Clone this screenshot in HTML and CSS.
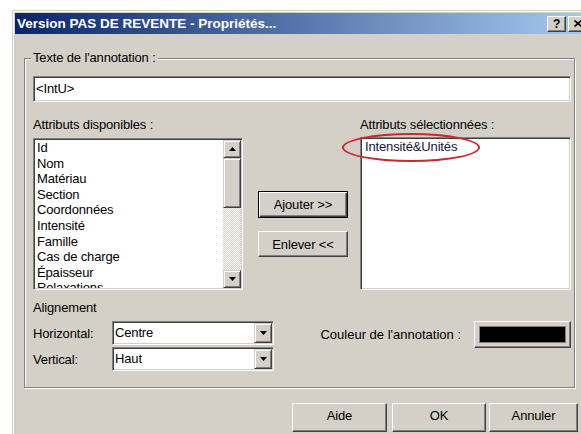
FILE: index.html
```html
<!DOCTYPE html>
<html lang="fr">
<head>
<meta charset="utf-8">
<title>Propriétés</title>
<link rel="stylesheet" href="styles.css">
</head>
<body>
<div class="dialog">
  <div class="titlebar">
    <span class="title">Version PAS DE REVENTE - Propriétés...</span>
    <span class="caption-btns">
      <span class="cap-btn help">?</span>
      <span class="cap-btn close"><svg width="8" height="7" viewBox="0 0 8 7"><path d="M0.5 0.5 L7.5 6.5 M7.5 0.5 L0.5 6.5" stroke="#000" stroke-width="1.6"/></svg></span>
    </span>
  </div>
  <div class="content">
    <fieldset class="group">
      <legend>Texte de l'annotation :</legend>
      <div class="textbox">&lt;IntU&gt;</div>

      <div class="attrs">
        <div class="col col-left">
          <div class="lbl">Attributs disponibles :</div>
          <div class="listbox">
            <ul class="items">
              <li>Id</li>
              <li>Nom</li>
              <li>Matériau</li>
              <li>Section</li>
              <li>Coordonnées</li>
              <li>Intensité</li>
              <li>Famille</li>
              <li>Cas de charge</li>
              <li>Épaisseur</li>
              <li>Relaxations</li>
            </ul>
            <div class="vscroll">
              <span class="sb-btn"><svg width="7" height="4" viewBox="0 0 7 4"><polygon points="0,4 7,4 3.5,0"/></svg></span>
              <span class="sb-thumb"></span>
              <span class="sb-track"></span>
              <span class="sb-btn"><svg width="7" height="4" viewBox="0 0 7 4"><polygon points="0,0 7,0 3.5,4"/></svg></span>
            </div>
          </div>
        </div>

        <div class="mid">
          <span class="btn btn-default">Ajouter &gt;&gt;</span>
          <span class="btn btn-remove">Enlever &lt;&lt;</span>
        </div>

        <div class="col col-right">
          <div class="lbl">Attributs sélectionnées :</div>
          <div class="sel-wrap">
            <div class="listbox">
              <ul class="items sel-items">
                <li>Intensité&amp;Unités</li>
              </ul>
            </div>
            <span class="mark"></span>
          </div>
        </div>
      </div>

      <div class="bottom">
        <div class="align">
          <div class="lbl">Alignement</div>
          <div class="row">
            <span class="row-lbl">Horizontal:</span>
            <div class="combo">
              <span class="val">Centre</span>
              <span class="drop"><svg width="7" height="4" viewBox="0 0 7 4"><polygon points="0,0 7,0 3.5,4"/></svg></span>
            </div>
          </div>
          <div class="row row-second">
            <span class="row-lbl">Vertical:</span>
            <div class="combo">
              <span class="val">Haut</span>
              <span class="drop"><svg width="7" height="4" viewBox="0 0 7 4"><polygon points="0,0 7,0 3.5,4"/></svg></span>
            </div>
          </div>
        </div>
        <div class="colour">
          <span class="colour-lbl">Couleur de l'annotation :</span>
          <span class="swatch-btn"><span class="swatch"></span></span>
        </div>
      </div>
    </fieldset>

    <div class="actions">
      <span class="btn act act-help">Aide</span>
      <span class="btn act act-ok">OK</span>
      <span class="btn act act-cancel">Annuler</span>
    </div>
  </div>
</div>
</body>
</html>
```
FILE: styles.css
```css
* {
  box-sizing: border-box;
}

html,
body {
  margin: 0;
  padding: 0;
}

body {
  width: 581px;
  height: 434px;
  overflow: hidden;
  background: #fff;
  font-family: "Liberation Sans", Arial, sans-serif;
  font-size: 13px;
  letter-spacing: -0.15px;
  color: #000;
}

/* window frame */
.dialog {
  margin: 10px 0 0 12px;
  width: 577px;
  height: 440px;
  background: #d4d0c8;
  border-top: 1px solid #d4d0c8;
  border-left: 1px solid #d4d0c8;
  padding: 2px 0 0 2px;
  box-shadow: inset 1px 1px 0 #fff;
}

.titlebar {
  height: 21px;
  display: flex;
  align-items: center;
  justify-content: space-between;
  padding: 0 2px 0 2px;
  background: linear-gradient(to right, #0a246a 0%, #a6caf0 100%);
}

.title {
  color: #fff;
  font-weight: bold;
  font-size: 13.5px;
  letter-spacing: 0;
}

.caption-btns {
  display: flex;
  gap: 2px;
}

.cap-btn {
  width: 19px;
  height: 16px;
  display: flex;
  align-items: center;
  justify-content: center;
  background: #d4d0c8;
  border: 1px solid;
  border-color: #fff #404040 #404040 #fff;
  box-shadow: inset -1px -1px 0 #808080;
  font-weight: bold;
  font-size: 12px;
  line-height: 1;
}

.content {
  padding: 16px 0 0 9px;
}

/* etched group box */
.group {
  margin: 0;
  width: 551px;
  min-width: 0;
  border: 1px solid #808080;
  box-shadow: 1px 1px 0 #fff, inset 1px 1px 0 #fff;
  padding: 10px 3px 16px 8px;
}

.group legend {
  padding: 0 2px;
  margin-left: -2px;
  line-height: 16px;
  background: #d4d0c8;
}

.textbox {
  height: 26px;
  background: #fff;
  border: 1px solid;
  border-color: #808080 #fff #fff #808080;
  box-shadow: inset 1px 1px 0 #404040, inset -1px -1px 0 #d4d0c8;
  padding: 0 2px;
  line-height: 24px;
}

.attrs {
  display: flex;
  margin-top: 15px;
}

.col-left {
  width: 210px;
}

.col-right {
  width: 211px;
}

.lbl {
  height: 16px;
  line-height: 16px;
}

.listbox {
  margin-top: 5px;
  height: 152px;
  display: flex;
  overflow: hidden;
  background: #fff;
  border: 1px solid;
  border-color: #808080 #fff #fff #808080;
  box-shadow: inset 1px 1px 0 #404040, inset -1px -1px 0 #d4d0c8;
  padding: 1px;
}

.items {
  list-style: none;
  margin: 0;
  padding: 0 0 0 2px;
  flex: 1;
  line-height: 15.6px;
  overflow: hidden;
  white-space: nowrap;
}

.sel-items {
  padding-left: 3px;
  color: #14143c;
}

.vscroll {
  width: 18px;
  display: flex;
  flex-direction: column;
}

.sb-btn,
.sb-thumb,
.drop {
  display: flex;
  align-items: center;
  justify-content: center;
  background: #d4d0c8;
  border: 1px solid;
  border-color: #d4d0c8 #404040 #404040 #d4d0c8;
  box-shadow: inset 1px 1px 0 #fff, inset -1px -1px 0 #808080;
}

.sb-btn {
  height: 18px;
}

.sb-thumb {
  height: 50px;
}

.sb-track {
  flex: 1;
  background: repeating-conic-gradient(#fff 0 25%, #d4d0c8 0 50%) 0 0 / 2px 2px;
}

.mid {
  width: 90px;
  margin: 0 12px 0 15px;
  padding-top: 74px;
  display: flex;
  flex-direction: column;
}

.btn {
  display: flex;
  align-items: center;
  justify-content: center;
  background: #d4d0c8;
  border: 1px solid;
  border-color: #fff #404040 #404040 #fff;
  box-shadow: inset -1px -1px 0 #808080;
}

.btn-default {
  height: 27px;
  border-color: #000;
  box-shadow: inset 1px 1px 0 #fff, inset -1px -1px 0 #404040, inset -2px -2px 0 #808080;
}

.btn-remove {
  height: 26px;
  margin-top: 13px;
}

.sel-wrap {
  position: relative;
}

.sel-wrap .listbox {
  margin-top: 4px;
  height: 153px;
}

/* red hand-drawn highlight round the selected attribute */
.mark {
  position: absolute;
  left: -18px;
  top: -4px;
  width: 138px;
  height: 29px;
  border: 2px solid #c42a2e;
  border-radius: 50%;
}

.bottom {
  display: flex;
  margin-top: 10px;
}

.row {
  display: flex;
  align-items: center;
  margin-top: 5px;
}

.row-second {
  margin-top: 2px;
}

.row-lbl {
  width: 79px;
}

.combo {
  width: 162px;
  height: 24px;
  display: flex;
  background: #fff;
  border: 1px solid;
  border-color: #808080 #fff #fff #808080;
  box-shadow: inset 1px 1px 0 #404040, inset -1px -1px 0 #d4d0c8;
  padding: 1px;
}

.val {
  flex: 1;
  padding-left: 1px;
  line-height: 20px;
}

.drop {
  width: 18px;
}

.colour {
  margin-left: auto;
  margin-top: 21px;
  height: 27px;
  display: flex;
  align-items: center;
  gap: 13px;
  letter-spacing: 0;
}

.swatch-btn {
  width: 97px;
  height: 27px;
  padding: 4px;
  background: #d4d0c8;
  border: 1px solid;
  border-color: #fff #404040 #404040 #fff;
  box-shadow: inset -1px -1px 0 #808080;
}

.swatch {
  display: block;
  height: 100%;
  background: #000;
  border: 1px solid #808080;
}

.actions {
  display: flex;
  margin: 15px 0 0 268px;
}

.act {
  height: 29px;
  align-items: flex-start;
  padding-top: 2px;
  line-height: 19px;
}

.act-help {
  width: 95px;
}

.act-ok {
  width: 94px;
  margin-left: 5px;
}

.act-cancel {
  width: 89px;
  margin-left: 3px;
}
```
